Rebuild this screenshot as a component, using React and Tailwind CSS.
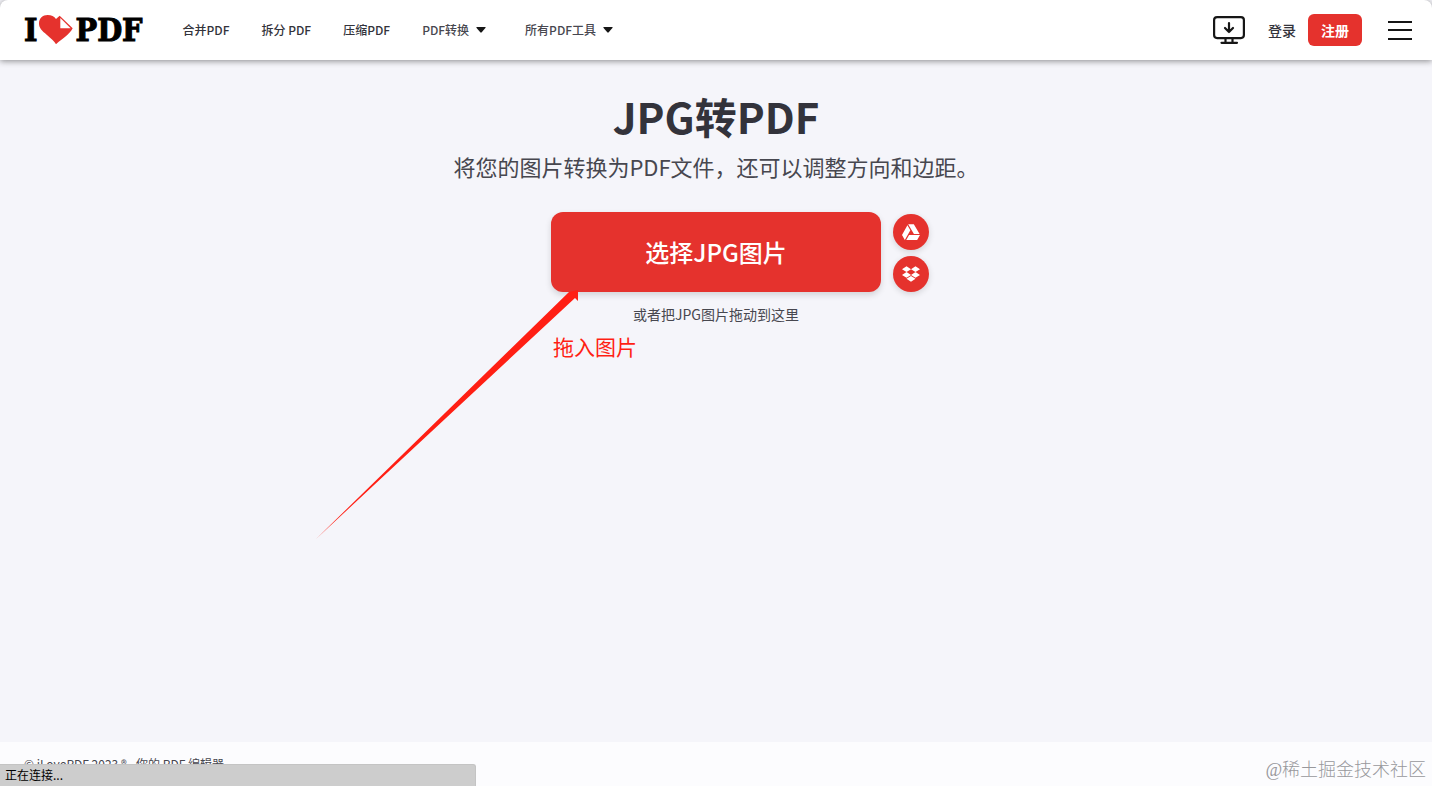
import React from "react";
import { FaDropbox, FaGoogleDrive } from "react-icons/fa";

const links = ["合并PDF", "拆分 PDF", "压缩PDF"];
const menus = ["PDF转换", "所有PDF工具"];

const Logo = () => (
  <a
    href="#"
    aria-label="I Love PDF"
    className="flex items-center font-['DejaVu_Serif_Condensed','DejaVu_Serif',serif] text-[32px] leading-8 font-bold text-black [-webkit-text-stroke:1px_black]"
  >
    <span>I</span>
    <svg viewBox="0 0 102 90" className="mx-[2px] h-[30px] w-[34px]">
      <path
        d="M51 88C47 79 37 72 24 60C8 47 0 39 0 25C0 10 11 0 26 0C37 0 46 4 51 12L62 2L101 40C97 49 88 58 75 68C62 78 54 83 51 88Z"
        fill="#e5322d"
      />
      <path d="M64 9V40H95Z" fill="#fff" />
    </svg>
    <span>PDF</span>
  </a>
);

const Caret = () => (
  <svg viewBox="0 0 10 6" className="h-[6px] w-[10px]" fill="#161616">
    <path d="M1 0H9Q10.200 0 9.400 1L5.700 5.300Q5 6 4.300 5.300L.6 1Q-.2 0 1 0Z" />
  </svg>
);

const Header = () => {
  return (
    <header className="relative flex h-15 items-center justify-between rounded-t-lg bg-white pr-5 pl-6 shadow-[0_1px_6px_rgba(0,0,0,0.45)]">
      <div className="flex items-center gap-10">
        <Logo />
        <nav className="flex items-center gap-8 text-xs font-medium text-[#33333b]">
          {links.map((label) => (
            <a key={label} href="#">
              {label}
            </a>
          ))}
          {menus.map((label) => (
            <button
              key={label}
              type="button"
              className="mr-[7px] flex items-center gap-[7px] text-[#47474f]"
            >
              {label}
              <Caret />
            </button>
          ))}
        </nav>
      </div>

      {/* Account actions */}
      <div className="flex items-center">
        <a href="#" aria-label="下载桌面版" className="mr-[23px]">
          <svg
            viewBox="0 0 32 28"
            className="h-7 w-8"
            fill="none"
            stroke="#161616"
            strokeWidth="2.200"
            strokeLinecap="round"
            strokeLinejoin="round"
          >
            <rect x="1.100" y="1.100" width="29.800" height="21" rx="3" />
            <path d="M16 7V16M12 12L16 16L20 12" />
            <path d="M12.500 22V26.500M19.500 22V26.500M8.500 26.800H24" />
          </svg>
        </a>
        <a href="#" className="mr-3 text-sm font-medium text-[#33333b]">
          登录
        </a>
        <button
          type="button"
          className="h-8 rounded-md bg-[#e5322d] px-[13px] text-sm font-bold text-white"
        >
          注册
        </button>
        <button type="button" aria-label="菜单" className="ml-[26px]">
          <svg viewBox="0 0 24 20" className="h-5 w-6" stroke="#161616" strokeWidth="2">
            <path d="M0 2H24M0 10H24M0 19H24" />
          </svg>
        </button>
      </div>
    </header>
  );
};

const roundButton =
  "flex size-9 items-center justify-center rounded-full bg-[#e5322d] text-lg text-white shadow-[0_2px_6px_rgba(0,0,0,0.14)]";

const Uploader = () => {
  return (
    <main className="flex-1 px-4 pt-[30px] text-center">
      <h1 className="text-[42px] leading-[52px] font-bold text-[#33333b]">JPG转PDF</h1>
      <h2 className="mt-2 text-[22px] leading-8 text-[#47474f]">
        将您的图片转换为PDF文件，还可以调整方向和边距。
      </h2>

      <div className="mt-[30px] grid grid-cols-[1fr_auto_1fr] items-end gap-3">
        <div className="relative col-start-2">
          <button
            type="button"
            className="h-20 w-[330px] rounded-xl bg-[#e5322d] text-2xl font-medium text-white shadow-[0_3px_6px_rgba(0,0,0,0.14)]"
          >
            选择JPG图片
          </button>
          {/* Hint arrow */}
          <svg
            viewBox="0 0 264 250"
            className="pointer-events-none absolute top-[77px] -left-[235px] h-[250px] w-[264px]"
            fill="#ff1f14"
          >
            <path d="M0 250L253 3L262 1V12L259 9Z" />
          </svg>
          <p className="absolute top-[118px] left-[2px] text-[21px] leading-8 text-[#ff1f14]">
            拖入图片
          </p>
        </div>
        <div className="flex flex-col gap-[6px]">
          <button type="button" aria-label="Google Drive" className={roundButton}>
            <FaGoogleDrive />
          </button>
          <button type="button" aria-label="Dropbox" className={roundButton}>
            <FaDropbox />
          </button>
        </div>
      </div>
      <p className="mt-3 text-sm text-[#47474f]">或者把JPG图片拖动到这里</p>
    </main>
  );
};

const App = () => {
  return (
    <div className="relative flex min-h-screen flex-col bg-[#f5f5fa] font-['Noto_Sans_CJK_SC',sans-serif]">
      <Header />
      <Uploader />
      <footer className="flex h-11 items-center justify-between bg-[#fcfcfe] pr-[6px] pl-6">
        <small className="text-xs text-[#47474f]">© iLovePDF 2023 ® - 你的 PDF 编辑器</small>
        <span className="mt-[10px] text-lg leading-6 font-light text-[#98989c]">
          <span className="font-['Liberation_Serif',serif] italic">@</span>稀土掘金技术社区
        </span>
      </footer>
      {/* Browser status */}
      <div className="fixed bottom-0 left-0 h-[22px] w-[476px] rounded-tr-[3px] border-t border-r border-[#c4c4c4] bg-[#cdcdcd] pl-[5px] text-xs leading-5 text-black">
        正在连接...
      </div>
    </div>
  );
};

export default App;
